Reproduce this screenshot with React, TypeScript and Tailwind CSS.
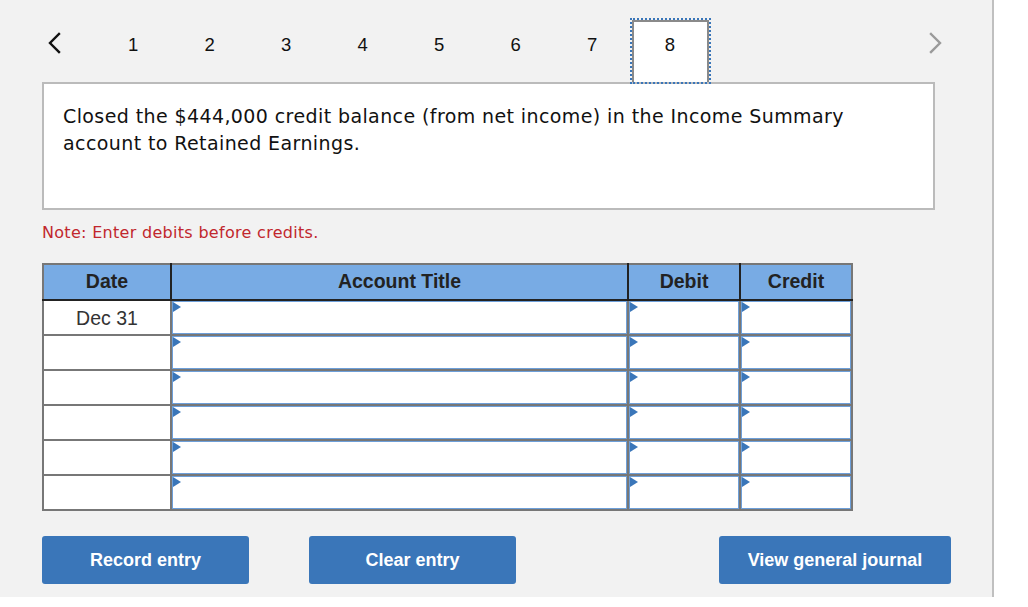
const tabs = [1, 2, 3, 4, 5, 6, 7, 8];
const rows = ["Dec 31", "", "", "", "", ""];

function Chevron({ dir, color }: { dir: "left" | "right"; color: string }) {
  return (
    <svg width="16" height="22" viewBox="0 0 16 22" fill="none" className={color}>
      <path
        d={dir === "left" ? "M13 2 L4 11 L13 20" : "M3 2 L12 11 L3 20"}
        stroke="currentColor"
        strokeWidth="2.4"
        strokeLinecap="square"
      />
    </svg>
  );
}

function InputCell() {
  return (
    <td className="border-2 border-[#777] p-0 h-[35px]">
      <div className="relative h-full border border-[#6d9fd9] bg-white">
        <span className="absolute left-0 top-0 w-0 h-0 border-t-[5px] border-b-[5px] border-l-[8px] border-t-transparent border-b-transparent border-l-[#3a76b9]" />
      </div>
    </td>
  );
}

export default function App() {
  return (
    <div className="bg-white min-h-[607px]">
      <div className="w-[994px] h-[597px] bg-[#f2f2f2] border-r-2 border-[#c0c0c0] relative font-['Liberation_Sans',Arial,sans-serif]">
        {/* tabs */}
        <div className="flex h-[82px]">
          <button className="ml-[46px] mt-[32px] self-start flex">
            <Chevron dir="left" color="text-[#111]" />
          </button>
          <div className="flex ml-[33px] h-[64px] mt-[18px] self-start">
            {tabs.map((t) =>
              t === 8 ? (
                <div
                  key={t}
                  className="w-[77px] h-[62px] mt-[2px] ml-[1px] outline-2 outline-dotted outline-offset-0 outline-[#3a76b9] border-2 border-b-0 border-[#8a8a8a] bg-white flex items-start justify-center pt-[9px] text-[18.5px] text-[#111] relative z-10"
                >
                  {t}
                </div>
              ) : (
                <div
                  key={t}
                  className="w-[76.5px] h-[64px] flex items-start justify-center pt-[13px] text-[18.5px] text-[#111]"
                >
                  {t}
                </div>
              )
            )}
          </div>
          <button className="ml-auto mr-[48px] mt-[32px] self-start flex">
            <Chevron dir="right" color="text-[#9a9a9a]" />
          </button>
        </div>

        {/* question */}
        <div className="mx-[42px] w-[893px] h-[128px] bg-white border-2 border-[#bbb] px-[19px] pt-[19px] font-['DejaVu_Sans',Verdana,sans-serif] text-[19px] tracking-[0.4px] leading-[27px] text-[#111]">
          Closed the $444,000 credit balance (from net income) in the Income Summary account to Retained Earnings.
        </div>

        <p className="ml-[42px] mt-[11px] font-['DejaVu_Sans',Verdana,sans-serif] text-[16px] tracking-[0.3px] text-[#c1272d]">
          Note: Enter debits before credits.
        </p>

        {/* table */}
        <table className="ml-[42px] mt-[18px] border-collapse w-[809px] table-fixed">
          <colgroup>
            <col className="w-[128px]" />
            <col className="w-[457px]" />
            <col className="w-[112px]" />
            <col className="w-[112px]" />
          </colgroup>
          <thead>
            <tr className="bg-[#78abe4] h-[36px] text-[19.5px] font-bold text-[#222]">
              <th className="border-2 border-[#777] border-b-[#222] border-r-[#222] font-bold">Date</th>
              <th className="border-2 border-[#777] border-b-[#222] border-r-[#222] font-bold">Account Title</th>
              <th className="border-2 border-[#777] border-b-[#222] border-r-[#222] font-bold">Debit</th>
              <th className="border-2 border-[#777] border-b-[#222] font-bold">Credit</th>
            </tr>
          </thead>
          <tbody>
            {rows.map((d, i) => (
              <tr key={i} className="h-[35px]">
                <td className="border-2 border-[#777] bg-white text-center text-[19.5px] text-[#333] align-middle pt-[3px]">
                  {d}
                </td>
                <InputCell />
                <InputCell />
                <InputCell />
              </tr>
            ))}
          </tbody>
        </table>

        {/* buttons */}
        <div className="flex mt-[25px] ml-[42px] text-white font-bold text-[18px]">
          <button className="w-[207px] h-[48px] bg-[#3a76b9] rounded-[3px]">Record entry</button>
          <button className="w-[207px] h-[48px] bg-[#3a76b9] rounded-[3px] ml-[60px]">Clear entry</button>
          <button className="w-[232px] h-[48px] bg-[#3a76b9] rounded-[3px] ml-[203px]">View general journal</button>
        </div>
      </div>
    </div>
  );
}
